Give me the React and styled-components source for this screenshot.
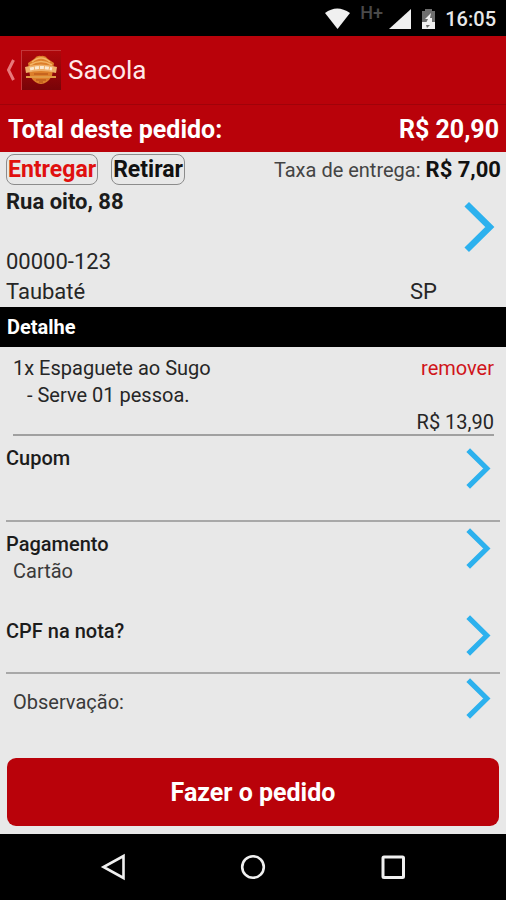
import styled, { createGlobalStyle } from 'styled-components';

const GlobalStyle = createGlobalStyle`
  * {
    box-sizing: border-box;
  }

  body {
    margin: 0;
    font-family: Roboto, sans-serif;
    background-color: #e8e8e8;
    color: #262626;
  }

  button {
    font-family: inherit;
    border: none;
    background: none;
    padding: 0;
    margin: 0;
    color: inherit;
    text-align: left;
    cursor: pointer;
  }
`;

const Chevron = ({ large }) => (
  <ChevronIcon viewBox="0 0 25 41" $large={large} aria-hidden="true">
    <path d="M2.2 2.2 L20.8 20.5 L2.2 38.8" fill="none" stroke="#2cb1ee" strokeWidth="5.2" />
  </ChevronIcon>
);

const Logo = () => (
  <svg width="40" height="40" viewBox="0 0 40 40" aria-hidden="true">
    <defs>
      <linearGradient id="logoBg" x1="0" y1="0" x2="0" y2="1">
        <stop offset="0" stopColor="#b0080b" />
        <stop offset="1" stopColor="#780408" />
      </linearGradient>
    </defs>
    <rect width="40" height="40" fill="url(#logoBg)" />
    <path d="M0 .5 H40 M.5 0 V40" stroke="#c4373a" strokeWidth="1" />
    <path d="M13 9 Q16 5 20 6 Q24 5 27 9 L33 13 L31 26 Q26 34 20 34 Q14 34 9 26 L7 13 Z" fill="#dd7f2b" />
    <path d="M11 12 Q20 4 29 12 M9 15 Q20 8 31 15" fill="none" stroke="#f3b566" strokeWidth="1.5" />
    <path d="M4 17 Q20 12 36 17 L35 23 Q20 19 5 23 Z" fill="#efb06a" />
    <path d="M9 19 Q20 16 31 19" fill="none" stroke="#fbe9d2" strokeWidth="3" strokeDasharray="4 1" />
    <path d="M5 27 H35" stroke="#e09a45" strokeWidth="2" />
    <path d="M13 24 H27 M15 30 H25 M18 32 H22" stroke="#b04d14" strokeWidth="1" />
  </svg>
);

const StatusIcons = () => (
  <svg width="112" height="24" viewBox="0 0 112 24" aria-hidden="true">
    <path d="M0 6 Q12 -3 25 6 L12.5 22 Z" fill="#f0f0f0" />
    <path d="M64 22 L86 2 V22 Z" fill="#f0f0f0" />
    <path d="M97 4 H100 V2 H107 V4 H110 V15 H97 Z" fill="#6d6d6d" />
    <path d="M97 15 H110 V22 H97 Z" fill="#f0f0f0" />
    <path d="M106 6 L100 12 H103 L101 16 H107 V11 H105 Z" fill="#f0f0f0" />
    <path d="M101 18 H105 L102 21 Z" fill="#6d6d6d" />
  </svg>
);

const items = [
  { name: '1x Espaguete ao Sugo', note: '- Serve 01 pessoa.', price: 'R$ 13,90' },
];

export default function App() {
  return (
    <Screen>
      <GlobalStyle />
      <StatusBar>
        <StatusGroup>
          <StatusIcons />
          <Network>H+</Network>
        </StatusGroup>
        <Clock>16:05</Clock>
      </StatusBar>

      <AppBar>
        <BackButton aria-label="Voltar">
          <svg width="10" height="22" viewBox="0 0 10 22" aria-hidden="true">
            <path d="M8.5 1 L3.5 11 L8.5 21" fill="none" stroke="#e8787b" strokeWidth="3" />
          </svg>
          <Logo />
        </BackButton>
        <Title>Sacola</Title>
      </AppBar>

      <TotalBar>
        <span>Total deste pedido:</span>
        <span>R$ 20,90</span>
      </TotalBar>

      <Content>
        <Delivery>
          <ModeButton $active aria-pressed="true">Entregar</ModeButton>
          <ModeButton aria-pressed="false">Retirar</ModeButton>
          <Fee>
            Taxa de entrega: <strong>R$ 7,00</strong>
          </Fee>
        </Delivery>

        <Address>
          <AddressText>
            <Street>Rua oito, 88</Street>
            <AddressLine />
            <AddressLine>00000-123</AddressLine>
            <AddressLine>
              <span>Taubaté</span>
              <span>SP</span>
            </AddressLine>
          </AddressText>
          <Chevron large />
        </Address>

        <SectionTitle>Detalhe</SectionTitle>

        <Items>
          {items.map((item) => (
            <Item key={item.name}>
              <ItemLine>
                <span>{item.name}</span>
                <RemoveButton>remover</RemoveButton>
              </ItemLine>
              <ItemNote>{item.note}</ItemNote>
              <Price>{item.price}</Price>
            </Item>
          ))}
        </Items>

        <Option $height={86} $top={12} $line>
          <Label>Cupom</Label>
          <Chevron />
        </Option>
        <Option $height={87} $top={6}>
          <span>
            <Label>Pagamento</Label>
            <Value>Cartão</Value>
          </span>
          <Chevron />
        </Option>
        <Option $height={65} $top={6} $line>
          <Label>CPF na nota?</Label>
          <Chevron />
        </Option>
        <Option $height={56} $top={4} $middle>
          <Value>Observação:</Value>
          <Chevron />
        </Option>
      </Content>

      <Footer>
        <OrderButton>Fazer o pedido</OrderButton>
      </Footer>

      <NavBar>
        <NavButton aria-label="Voltar">
          <svg width="28" height="28" viewBox="0 0 28 28" aria-hidden="true">
            <path d="M24.5 3 V25 L4.5 14 Z" fill="none" stroke="#f0f0f0" strokeWidth="2.6" />
          </svg>
        </NavButton>
        <NavButton aria-label="Início">
          <svg width="28" height="28" viewBox="0 0 28 28" aria-hidden="true">
            <circle cx="14" cy="14" r="10.8" fill="none" stroke="#f0f0f0" strokeWidth="2.6" />
          </svg>
        </NavButton>
        <NavButton aria-label="Recentes">
          <svg width="28" height="28" viewBox="0 0 28 28" aria-hidden="true">
            <rect x="4" y="4" width="20.5" height="20.5" rx="1" fill="none" stroke="#f0f0f0" strokeWidth="3" />
          </svg>
        </NavButton>
      </NavBar>
    </Screen>
  );
}

const Screen = styled.div`
  min-height: 100vh;
  display: flex;
  flex-direction: column;
`;

const StatusBar = styled.div`
  height: 36px;
  padding: 2px 10px 0;
  display: flex;
  align-items: center;
  justify-content: flex-end;
  gap: 8px;
  background-color: #000000;
`;

const StatusGroup = styled.div`
  position: relative;
  display: flex;
`;

/* Sits in the free slot between the wifi and signal icons */
const Network = styled.span`
  position: absolute;
  left: 35px;
  top: -4px;
  font-size: 18px;
  line-height: 20px;
  font-weight: 500;
  color: #4a4a4a;
`;

const Clock = styled.span`
  font-size: 20px;
  font-weight: 500;
  color: #e8e8e8;
`;

const AppBar = styled.header`
  height: 69px;
  padding: 0 5px;
  display: flex;
  align-items: center;
  gap: 7px;
  background-color: #b9020a;
  border-bottom: 1px solid #a00209;
`;

const BackButton = styled.button`
  display: flex;
  align-items: center;
  gap: 6px;
`;

const Title = styled.h1`
  margin: 0;
  font-size: 26px;
  font-weight: 400;
  color: #ffe9e9;
`;

const TotalBar = styled.div`
  height: 47px;
  padding: 1px 7px 0 8px;
  display: flex;
  align-items: center;
  justify-content: space-between;
  background-color: #b9020a;
  color: #ffffff;
  font-size: 25px;
  font-weight: 700;
`;

const Content = styled.main`
  flex: 1;
`;

const Delivery = styled.div`
  height: 35px;
  padding: 0 5px 0 6px;
  display: flex;
  align-items: center;
  gap: 13px;
`;

const ModeButton = styled.button`
  height: 31px;
  padding: 0 1px;
  border: 1px solid #8c8c8c;
  border-radius: 8px;
  font-size: 23px;
  line-height: 29px;
  font-weight: 700;
  color: ${({ $active }) => ($active ? '#e0100f' : '#111111')};
`;

const Fee = styled.span`
  margin-left: auto;
  font-size: 20px;
  color: #444444;

  strong {
    font-size: 22px;
    color: #111111;
  }
`;

const ChevronIcon = styled.svg`
  flex: none;
  width: ${({ $large }) => ($large ? 31 : 25)}px;
  height: ${({ $large }) => ($large ? 52 : 41)}px;
`;

const Address = styled.button`
  width: 100%;
  padding: 0 11px 0 6px;
  display: flex;
  align-items: flex-start;
  gap: 27px;

  ${ChevronIcon} {
    margin-top: 14px;
  }
`;

const AddressText = styled.span`
  flex: 1;
`;

const AddressLine = styled.span`
  height: 30px;
  display: flex;
  justify-content: space-between;
  font-size: 22px;
  line-height: 30px;
`;

const Street = styled(AddressLine)`
  font-weight: 700;
  color: #1c1c1c;
`;

const SectionTitle = styled.h2`
  margin: 0;
  padding: 0 7px;
  font-size: 20px;
  line-height: 40px;
  font-weight: 700;
  color: #ffffff;
  background-color: #000000;
`;

const Items = styled.ul`
  list-style: none;
  margin: 0;
  padding: 0 12px 0 13px;
`;

const Item = styled.li`
  padding-top: 8px;
  border-bottom: 2px solid #a0a0a0;
  font-size: 20px;
  line-height: 27px;
`;

const ItemLine = styled.div`
  display: flex;
  justify-content: space-between;
`;

const ItemNote = styled.div`
  padding-left: 14px;
`;

const Price = styled.div`
  height: 25px;
  text-align: right;
`;

const RemoveButton = styled.button`
  font-size: 20px;
  line-height: 27px;
  color: #d0141a;
`;

const Option = styled.button`
  width: calc(100% - 12px);
  min-height: ${({ $height }) => $height}px;
  margin: 0 6px;
  padding: ${({ $middle }) => ($middle ? 0 : 9)}px 9px 0 0;
  display: flex;
  align-items: ${({ $middle }) => ($middle ? 'center' : 'flex-start')};
  justify-content: space-between;
  font-size: 20px;
  line-height: 27px;
  border-bottom: ${({ $line }) => ($line ? '2px solid #a8a8a8' : 'none')};

  ${ChevronIcon} {
    align-self: flex-start;
    margin-top: ${({ $top, $middle }) => ($middle ? $top : $top - 9)}px;
  }
`;

const Label = styled.span`
  display: block;
  font-weight: 500;
  color: #1c1c1c;
`;

const Value = styled.span`
  display: block;
  padding-left: 7px;
  color: #3a3a3a;
`;

const Footer = styled.div`
  padding: 8px 7px;
`;

const OrderButton = styled.button`
  width: 100%;
  height: 68px;
  border-radius: 9px;
  background-color: #b9020a;
  color: #ffffff;
  font-size: 25px;
  font-weight: 700;
  text-align: center;
`;

const NavBar = styled.nav`
  height: 66px;
  padding: 0 43px;
  display: flex;
  align-items: center;
  background-color: #000000;
`;

const NavButton = styled.button`
  flex: 1;
  display: flex;
  justify-content: center;
`;
